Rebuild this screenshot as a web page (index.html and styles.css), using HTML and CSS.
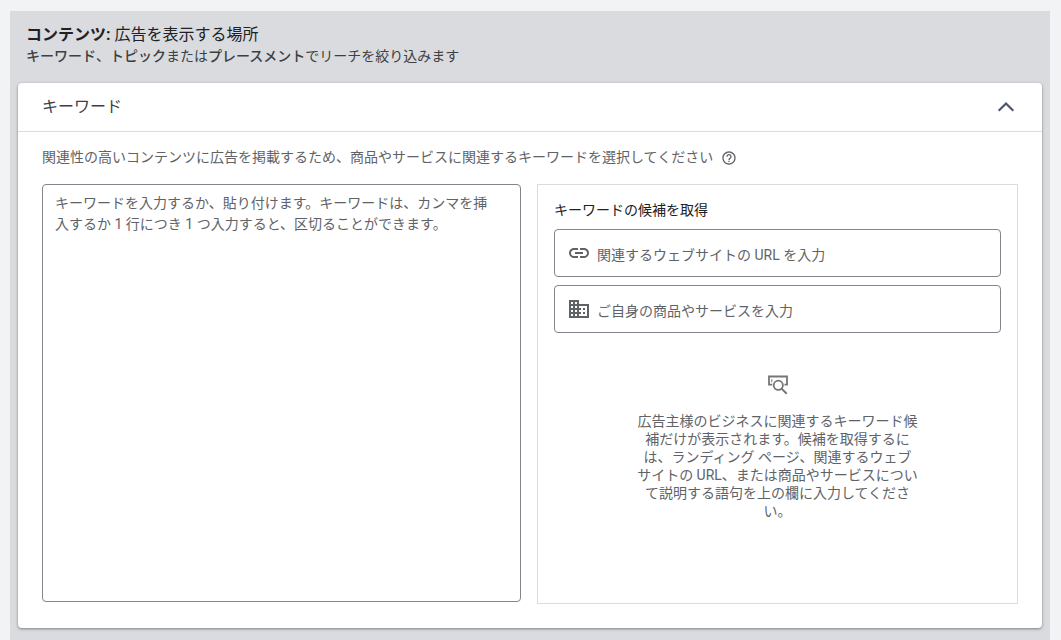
FILE: index.html
```html
<!DOCTYPE html>
<html lang="ja">
<head>
<meta charset="utf-8">
<meta name="viewport" content="width=device-width, initial-scale=1">
<title>コンテンツ</title>
<link rel="stylesheet" href="styles.css">
</head>
<body>
<main class="section">
  <header class="section-header">
    <h1 class="section-title"><b>コンテンツ:</b> 広告を表示する場所</h1>
    <p class="section-subtitle"><b>キーワード</b>、<b>トピック</b>または<b>プレースメント</b>でリーチを絞り込みます</p>
  </header>
  <section class="card">
    <div class="card-header">
      <h2 class="card-title">キーワード</h2>
      <button class="icon-button" type="button" aria-label="閉じる" aria-expanded="true">
        <svg width="24" height="24" viewBox="0 0 24 24" fill="none" stroke="#4d5470" stroke-width="2.2"><path d="M4.700 15.800 12 8.500l7.300 7.300"/></svg>
      </button>
    </div>
    <div class="card-body">
      <div class="intro">
        <label class="intro-text" for="keywords">関連性の高いコンテンツに広告を掲載するため、商品やサービスに関連するキーワードを選択してください</label>
        <button class="icon-button" type="button" aria-label="ヘルプ">
          <svg width="16" height="16" viewBox="0 0 24 24" fill="#5f6368"><path d="M11 18h2v-2h-2v2zm1-16C6.480 2 2 6.480 2 12s4.480 10 10 10 10-4.480 10-10S17.520 2 12 2zm0 18c-4.410 0-8-3.590-8-8s3.590-8 8-8 8 3.590 8 8-3.590 8-8 8zm0-14c-2.210 0-4 1.790-4 4h2c0-1.100.9-2 2-2s2 .9 2 2c0 2-3 1.750-3 5h2c0-2.250 3-2.500 3-5 0-2.210-1.790-4-4-4z"/></svg>
        </button>
      </div>
      <div class="columns">
        <textarea class="keywords" id="keywords" placeholder="キーワードを入力するか、貼り付けます。キーワードは、カンマを挿入するか 1 行につき 1 つ入力すると、区切ることができます。"></textarea>
        <div class="ideas">
          <h3 class="ideas-title">キーワードの候補を取得</h3>
          <label class="field">
            <svg class="field-icon" width="24" height="24" viewBox="0 0 24 24" fill="#5f6368"><path d="M3.900 12c0-1.710 1.390-3.100 3.100-3.100h4V7H7c-2.760 0-5 2.240-5 5s2.240 5 5 5h4v-1.900H7c-1.710 0-3.100-1.390-3.100-3.100zM8 13h8v-2H8v2zm9-6h-4v1.900h4c1.710 0 3.100 1.390 3.100 3.100s-1.390 3.100-3.100 3.100h-4V17h4c2.760 0 5-2.240 5-5s-2.240-5-5-5z"/></svg>
            <input class="field-input" type="url" aria-label="関連するウェブサイトの URL" placeholder="関連するウェブサイトの URL を入力">
          </label>
          <label class="field">
            <svg class="field-icon" width="24" height="24" viewBox="0 0 24 24" fill="#5f6368"><path d="M12 7V3H2v18h20V7H12zM6 19H4v-2h2v2zm0-4H4v-2h2v2zm0-4H4V9h2v2zm0-4H4V5h2v2zm4 12H8v-2h2v2zm0-4H8v-2h2v2zm0-4H8V9h2v2zm0-4H8V5h2v2zm10 12h-8v-2h2v-2h-2v-2h2v-2h-2V9h8v10zm-2-8h-2v2h2v-2zm0 4h-2v2h2v-2z"/></svg>
            <input class="field-input" type="text" aria-label="ご自身の商品やサービス" placeholder="ご自身の商品やサービスを入力">
          </label>
          <div class="empty">
            <svg width="24" height="24" viewBox="0 0 24 24" fill="none" stroke="#757575"><path d="M6.200 12.700H3V4.500h18v8.200h-2.500" stroke-width="1.800"/><path d="M5.800 7.200v3" stroke-width="1"/><circle cx="12.300" cy="13.300" r="4.600" stroke-width="1.800"/><path d="m15.600 16.600 5.100 5.100" stroke-width="2"/></svg>
            <p class="empty-text">広告主様のビジネスに関連するキーワード候<br>補だけが表示されます。候補を取得するに<br>は、ランディング ページ、関連するウェブ<br>サイトの URL、または商品やサービスについ<br>て説明する語句を上の欄に入力してくださ<br>い。</p>
          </div>
        </div>
      </div>
    </div>
  </section>
</main>
</body>
</html>
```
FILE: styles.css
```css
* {
  box-sizing: border-box;
}

body {
  margin: 0;
  padding: 11px 11px 0 10px;
  background: #f1f3f4;
  color: #5f6368;
  font-family: Roboto, "Noto Sans CJK JP", sans-serif;
  font-size: 14px;
  line-height: 18px;
}

h1, h2, h3, p {
  margin: 0;
  font-weight: 400;
}

b {
  font-weight: 700;
}

.section {
  padding: 12px 8px;
  background: #dadbdf;
}

.section-header {
  padding: 0 8px 18px;
}

.section-title {
  color: #202124;
  font-size: 16px;
  line-height: 24px;
}

.section-subtitle {
  color: #3c4043;
}

.section-subtitle b {
  font-weight: 500;
}

.card {
  background: #fff;
  border-radius: 4px;
  box-shadow: 0 1px 3px rgba(60, 64, 67, 0.6);
}

.card-header {
  display: flex;
  align-items: center;
  justify-content: space-between;
  height: 49px;
  padding: 0 24px;
  border-bottom: 1px solid #dadce0;
}

.card-title {
  color: #3c4043;
  font-size: 16px;
  line-height: 24px;
}

.icon-button {
  display: flex;
  align-items: center;
  padding: 0;
  border: 0;
  background: none;
}

.card-body {
  padding: 16px 24px 24px;
}

.intro {
  display: flex;
  gap: 8px;
  min-height: 20px;
  margin-bottom: 16px;
}

.columns {
  display: grid;
  grid-template-columns: 479fr 481fr;
  gap: 16px;
}

.keywords {
  width: 100%;
  height: 418px;
  padding: 8px 24px 8px 12px;
  border: 1px solid #80868b;
  border-radius: 4px;
  font: inherit;
  line-height: 21px;
  resize: none;
}

::placeholder {
  color: #5f6368;
  opacity: 1;
}

.ideas {
  min-height: 420px;
  padding: 16px;
  border: 1px solid #dadce0;
}

.ideas-title {
  margin-bottom: 10px;
  color: #202124;
  font-size: 14px;
}

.field {
  display: flex;
  align-items: center;
  gap: 6px;
  height: 48px;
  margin-bottom: 8px;
  padding: 0 12px;
  border: 1px solid #80868b;
  border-radius: 4px;
}

.field-icon {
  flex: none;
}

.field-input {
  flex: 1;
  min-width: 0;
  height: 24px;
  padding: 3px 0 0;
  border: 0;
  background: none;
  font: inherit;
}

.empty {
  display: flex;
  flex-direction: column;
  align-items: center;
  gap: 16px;
  padding-top: 31px;
}

.empty-text {
  text-align: center;
}
```
